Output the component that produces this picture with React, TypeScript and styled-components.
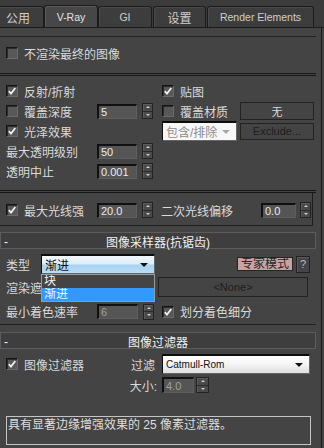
import styled, { createGlobalStyle } from 'styled-components'

const GlobalStyle = createGlobalStyle`
  html, body {
    margin: 0;
    padding: 0;
    background: #444444;
  }
  body {
    font-family: "Liberation Sans", "Noto Sans CJK SC", sans-serif;
    font-size: 12px;
    color: #dadada;
  }
`

const Window = styled.div`
  width: 324px;
  height: 448px;
  overflow: hidden;
  background: #444444;
`

const TabBar = styled.div`
  height: 28px;
  box-sizing: border-box;
  display: flex;
  align-items: flex-end;
  background: #3b3b3b;
  border-bottom: 1px solid #1c1c1c;
  overflow: hidden;
`

const Tab = styled.div<{ $w: number; $active?: boolean; $ml?: number }>`
  width: ${p => p.$w}px;
  height: ${p => (p.$active ? 22 : 21)}px;
  margin-left: ${p => p.$ml ?? 0}px;
  flex-shrink: 0;
  box-sizing: border-box;
  border: 1px solid #1c1c1c;
  border-bottom: none;
  border-radius: 3px 3px 0 0;
  background: ${p => (p.$active ? '#474747' : '#3d3d3d')};
  box-shadow: ${p => (p.$active ? 'inset 1px 1px 0 #5a5a5a' : 'inset 1px 1px 0 #4a4a4a')};
  display: flex;
  align-items: center;
  justify-content: center;
  font-size: 10.5px;
  color: ${p => (p.$active ? '#e2e2e2' : '#cfcfcf')};
`

const TabCjk = styled.span`
  font-size: 12px;
`

const Body = styled.div`
  display: flex;
  height: 420px;
`

const Panel = styled.div`
  width: 321px;
  border-right: 1px solid #1c1c1c;
  padding-top: 8px;
`

const Rollout = styled.div`
  width: 316px;
  border-top: 1px solid #222222;
`

const TopRow = styled.div`
  height: 32px;
  margin-bottom: 4px;
  padding-left: 6px;
  display: flex;
  align-items: center;
`

const DoubleLine = styled.div`
  width: 316px;
  height: 3px;
  box-sizing: border-box;
  border-top: 1px solid #161616;
  border-bottom: 1px solid #161616;
`

const Block = styled.div<{ $pt?: number; $pb?: number }>`
  padding-top: ${p => p.$pt ?? 0}px;
  padding-bottom: ${p => p.$pb ?? 0}px;
`

const Pair = styled.div<{ $h?: number }>`
  display: grid;
  grid-template-columns: 162px 1fr;
  height: ${p => p.$h ?? 20}px;
`

const Cell = styled.div<{ $pl?: number; $pr?: number; $end?: boolean }>`
  display: flex;
  align-items: center;
  padding-left: ${p => p.$pl ?? 0}px;
  padding-right: ${p => p.$pr ?? 0}px;
  justify-content: ${p => (p.$end ? 'flex-end' : 'flex-start')};
  min-width: 0;
`

const Labelled = styled.div<{ $w: number; $mr?: number }>`
  width: ${p => p.$w}px;
  margin-right: ${p => p.$mr ?? 0}px;
  flex-shrink: 0;
  display: flex;
  align-items: center;
  gap: 6px;
  white-space: nowrap;
  overflow: hidden;
`

const Text = styled.span<{ $tone?: 'dim'; $push?: boolean }>`
  white-space: nowrap;
  margin-left: ${p => (p.$push ? 'auto' : '0')};
  color: ${p => (p.$tone === 'dim' ? '#9a9a9a' : '#dadada')};
`

const CheckBox = styled.span`
  width: 12px;
  height: 12px;
  box-sizing: border-box;
  flex-shrink: 0;
  border: 1px solid;
  border-color: #141414 #6a6a6a #6a6a6a #141414;
  background: #585858;
  box-shadow: inset 1px 1px 0 #2c2c2c;
  display: inline-flex;
  align-items: center;
  justify-content: center;
`

const Check = ({ on }: { on?: boolean }) => (
  <CheckBox>
    {on && (
      <svg width="8" height="8" viewBox="0 0 8 8">
        <path d="M0.8 4.2 L3 6.6 L7.3 1" fill="none" stroke="#f0f0f0" strokeWidth="1.8" />
      </svg>
    )}
  </CheckBox>
)

const Field = styled.div<{ $w: number; $h?: number; $dim?: boolean }>`
  width: ${p => p.$w}px;
  height: ${p => p.$h ?? 15}px;
  box-sizing: border-box;
  flex-shrink: 0;
  border-top: 2px solid #101010;
  border-left: 2px solid #101010;
  border-right: 1px solid #5e5e5e;
  border-bottom: 1px solid #5e5e5e;
  background: #555555;
  padding-left: 2px;
  font-size: 11px;
  display: flex;
  align-items: center;
  color: ${p => (p.$dim ? '#a0a0a0' : '#eaeaea')};
`

const SpinBox = styled.div<{ $ml?: number; $w?: number }>`
  width: ${p => p.$w ?? 11}px;
  height: 16px;
  margin-left: ${p => p.$ml ?? 5}px;
  flex-shrink: 0;
  box-sizing: border-box;
  border: 1px solid #222222;
  background: #4a4a4a;
  box-shadow: inset 1px 1px 0 #5c5c5c;
  display: flex;
  flex-direction: column;
`

const SpinHalf = styled.div<{ $top?: boolean }>`
  flex: 1;
  display: flex;
  align-items: center;
  justify-content: center;
  border-bottom: ${p => (p.$top ? '1px solid #2a2a2a' : 'none')};
`

const Tri = styled.span<{ $up?: boolean; $color?: string; $size?: number }>`
  width: 0;
  height: 0;
  border-left: ${p => p.$size ?? 3}px solid transparent;
  border-right: ${p => p.$size ?? 3}px solid transparent;
  ${p =>
    p.$up
      ? `border-bottom: ${p.$size ?? 3}px solid ${p.$color ?? '#d0d0d0'};`
      : `border-top: ${p.$size ?? 3}px solid ${p.$color ?? '#d0d0d0'};`}
`

const Spin = ({ ml, w }: { ml?: number; w?: number }) => (
  <SpinBox $ml={ml} $w={w}>
    <SpinHalf $top>
      <Tri $up $size={2} />
    </SpinHalf>
    <SpinHalf>
      <Tri $size={2} />
    </SpinHalf>
  </SpinBox>
)

const Button = styled.div<{ $w: number; $h?: number; $dim?: boolean; $ml?: number }>`
  width: ${p => p.$w}px;
  height: ${p => p.$h ?? 18}px;
  margin-left: ${p => p.$ml ?? 0}px;
  flex-shrink: 0;
  box-sizing: border-box;
  border: 1px solid #222222;
  background: #444444;
  display: flex;
  align-items: center;
  justify-content: center;
  font-size: 11px;
  color: ${p => (p.$dim ? '#1e1e1e' : '#dadada')};
`

const Combo = styled.div<{ $w: number; $tone: 'blue' | 'white' | 'off' }>`
  width: ${p => p.$w}px;
  height: 20px;
  box-sizing: border-box;
  flex-shrink: 0;
  border-top: 2px solid #0c0c0c;
  border-left: 1px solid #0c0c0c;
  border-right: 1px solid #666666;
  border-bottom: 1px solid #666666;
  background: ${p =>
    p.$tone === 'blue'
      ? 'linear-gradient(#f3f9fd 0%, #dcedf9 45%, #a9d3f1 55%, #b8dcf4 100%)'
      : p.$tone === 'white'
        ? 'linear-gradient(#ffffff 0%, #f4f4f4 50%, #dedede 100%)'
        : '#f7f7f7'};
  color: ${p => (p.$tone === 'off' ? '#8c8c8c' : '#101010')};
  display: flex;
  align-items: center;
  justify-content: space-between;
  padding: 0 6px 0 3px;
  overflow: hidden;
  white-space: nowrap;
`

const ComboLatin = styled.span`
  font-size: 10px;
`

const RayBox = styled.div`
  width: 313px;
  height: 33px;
  box-sizing: border-box;
  padding-top: 2px;
  padding-left: 6px;
  border-right: 1px solid #1e1e1e;
  border-bottom: 1px solid #1e1e1e;
  display: flex;
  align-items: center;
`

const RollHeader = styled.div<{ $mt: number }>`
  width: 316px;
  height: 17px;
  margin-top: ${p => p.$mt}px;
  box-sizing: border-box;
  border: 1px solid #5c5c5c;
  background: #3e3e3e;
  display: grid;
  grid-template-columns: 22px 1fr 22px;
  align-items: center;
  color: #f2f2f2;
`

const Minus = styled.span`
  padding-left: 3px;
  line-height: 1;
`

const Title = styled.span`
  text-align: center;
  white-space: nowrap;
`

const Section = styled.div`
  width: 316px;
  padding-top: 4px;
  border-bottom: 1px solid #202020;
`

const Row = styled.div<{ $h: number; $pr?: number }>`
  height: ${p => p.$h}px;
  padding-left: 6px;
  padding-right: ${p => p.$pr ?? 0}px;
  display: flex;
  align-items: center;
`

const ComboWrap = styled.div`
  position: relative;
  display: flex;
`

const DropList = styled.div`
  position: absolute;
  top: 20px;
  left: 0;
  width: 114px;
  box-sizing: border-box;
  border: 1px solid #9a9a9a;
  background: #444444;
  z-index: 2;
`

const DropItem = styled.div<{ $sel?: boolean }>`
  height: 13px;
  line-height: 13px;
  padding-left: 2px;
  overflow: hidden;
  background: ${p => (p.$sel ? '#3399ff' : 'transparent')};
  color: #f4f4f4;
`

const ExpertButton = styled.div`
  width: 56px;
  height: 14px;
  margin-left: auto;
  box-sizing: border-box;
  border: 1px solid #242424;
  background: #c9a2a2;
  color: #262626;
  display: flex;
  align-items: center;
  justify-content: center;
  line-height: 1;
`

const HelpButton = styled.div`
  width: 14px;
  height: 17px;
  margin-left: 3px;
  box-sizing: border-box;
  border: 1px solid #222222;
  box-shadow: inset 1px 1px 0 #5a5a5a;
  background: #444444;
  color: #bdbdbd;
  font-size: 11px;
  display: flex;
  align-items: center;
  justify-content: center;
`

const Description = styled.div`
  width: 305px;
  height: 29px;
  margin: 21px 0 0 6px;
  box-sizing: border-box;
  border: 1px solid #c4c4c4;
  padding-left: 1px;
  line-height: 16px;
  color: #dedede;
`

const Spinner = ({ value, w = 40, ml, dim }: { value: string; w?: number; ml?: number; dim?: boolean }) => (
  <>
    <Field $w={w} $dim={dim}>{value}</Field>
    <Spin ml={ml} />
  </>
)

export default function App() {
  return (
    <Window>
      <GlobalStyle />
      <TabBar>
        <Tab $w={52} $ml={-8}><TabCjk>公用</TabCjk></Tab>
        <Tab $w={54} $active>V-Ray</Tab>
        <Tab $w={54}>GI</Tab>
        <Tab $w={53} $ml={1}><TabCjk>设置</TabCjk></Tab>
        <Tab $w={107} $ml={1}>Render Elements</Tab>
      </TabBar>
      <Body>
        <Panel>
          <Rollout>
            <TopRow>
              <Labelled $w={200}>
                <Check />
                <Text>不渲染最终的图像</Text>
              </Labelled>
            </TopRow>
            <DoubleLine />
            <Block $pt={5} $pb={9}>
              <Pair>
                <Cell $pl={6}>
                  <Labelled $w={120}><Check on /><Text>反射/折射</Text></Labelled>
                </Cell>
                <Cell>
                  <Labelled $w={78}><Check on /><Text>贴图</Text></Labelled>
                </Cell>
              </Pair>
              <Pair>
                <Cell $pl={6}>
                  <Labelled $w={91}><Check /><Text>覆盖深度</Text></Labelled>
                  <Spinner value="5" />
                </Cell>
                <Cell>
                  <Labelled $w={78}><Check /><Text>覆盖材质</Text></Labelled>
                  <Button $w={74}>无</Button>
                </Cell>
              </Pair>
              <Pair>
                <Cell $pl={6}>
                  <Labelled $w={120}><Check on /><Text>光泽效果</Text></Labelled>
                </Cell>
                <Cell>
                  <Combo $w={75} $tone="off">
                    <span>包含/排除</span>
                    <Tri $color="#a8a8a8" $size={4} />
                  </Combo>
                  <Button $w={74} $h={17} $ml={3} $dim>Exclude...</Button>
                </Cell>
              </Pair>
              <Pair>
                <Cell $pl={6}>
                  <Labelled $w={91}><Text>最大透明级别</Text></Labelled>
                  <Spinner value="50" />
                </Cell>
                <Cell />
              </Pair>
              <Pair>
                <Cell $pl={6}>
                  <Labelled $w={91}><Text>透明中止</Text></Labelled>
                  <Spinner value="0.001" />
                </Cell>
                <Cell />
              </Pair>
            </Block>
            <DoubleLine />
            <RayBox>
              <Labelled $w={91}><Check on /><Text>最大光线强</Text></Labelled>
              <Spinner value="20.0" />
              <Labelled $w={100} style={{ marginLeft: 8 }}><Text>二次光线偏移</Text></Labelled>
              <Spinner value="0.0" w={35} ml={4} />
            </RayBox>
          </Rollout>

          <RollHeader $mt={6}>
            <Minus>-</Minus>
            <Title>图像采样器(抗锯齿)</Title>
            <span />
          </RollHeader>
          <Section>
            <Row $h={22} $pr={6}>
              <Labelled $w={35}><Text>类型</Text></Labelled>
              <ComboWrap>
                <Combo $w={114} $tone="blue">
                  <span>渐进</span>
                  <Tri $color="#101010" $size={4} />
                </Combo>
                <DropList>
                  <DropItem>块</DropItem>
                  <DropItem $sel>渐进</DropItem>
                </DropList>
              </ComboWrap>
              <ExpertButton>专家模式</ExpertButton>
              <HelpButton>?</HelpButton>
            </Row>
            <Row $h={24}>
              <Labelled $w={35} $mr={117}><Text>渲染遮罩</Text></Labelled>
              <Button $w={150} $h={20} $dim>&lt;None&gt;</Button>
            </Row>
            <Pair $h={25}>
              <Cell $pl={6}>
                <Labelled $w={91}><Text>最小着色速率</Text></Labelled>
                <Spinner value="6" w={41} dim />
              </Cell>
              <Cell>
                <Labelled $w={140}><Check on /><Text>划分着色细分</Text></Labelled>
              </Cell>
            </Pair>
          </Section>

          <RollHeader $mt={7}>
            <Minus>-</Minus>
            <Title>图像过滤器</Title>
            <span />
          </RollHeader>
          <Block $pt={4}>
            <Pair $h={22}>
              <Cell $pl={6} $pr={7}>
                <Labelled $w={100}><Check on /><Text>图像过滤器</Text></Labelled>
                <Text $push>过滤</Text>
              </Cell>
              <Cell>
                <Combo $w={148} $tone="white">
                  <ComboLatin>Catmull-Rom</ComboLatin>
                  <Tri $color="#101010" $size={4} />
                </Combo>
              </Cell>
            </Pair>
            <Pair $h={20}>
              <Cell $pr={5} $end>
                <Text>大小:</Text>
              </Cell>
              <Cell>
                <Field $w={32} $h={16} $dim>4.0</Field>
                <Spin ml={2} w={13} />
              </Cell>
            </Pair>
          </Block>
          <Description>具有显著边缘增强效果的 25 像素过滤器。</Description>
        </Panel>
      </Body>
    </Window>
  )
}
